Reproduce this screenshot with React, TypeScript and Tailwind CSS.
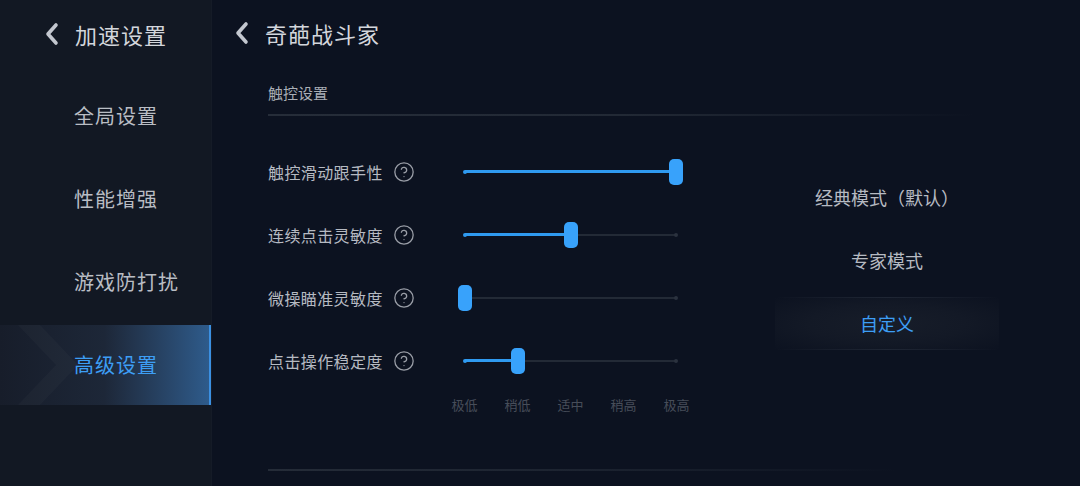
import { CircleHelp } from 'lucide-react';

const font = { fontFamily: '"Noto Sans CJK SC", "Noto Sans", sans-serif' };

const menu = ['全局设置', '性能增强', '游戏防打扰', '高级设置'];

const sliders = [
  { label: '触控滑动跟手性', value: 1 },
  { label: '连续点击灵敏度', value: 0.5 },
  { label: '微操瞄准灵敏度', value: 0 },
  { label: '点击操作稳定度', value: 0.25 },
];

const ticks = ['极低', '稍低', '适中', '稍高', '极高'];

const modes = ['经典模式（默认）', '专家模式', '自定义'];

function Chevron() {
  return (
    <svg width="18" height="24" viewBox="0 0 18 24" className="shrink-0">
      <path d="M13 3 L5 12 L13 21" fill="none" stroke="#c3c7cf" strokeWidth="3.6" strokeLinecap="round" strokeLinejoin="round" />
    </svg>
  );
}

function Slider({ value }: { value: number }) {
  const TRACK = 211;
  return (
    <div className="relative w-[225px] h-[28px]">
      <div className="absolute left-[7px] right-[7px] top-[13px] h-[2px] bg-[#232a36]" />
      <div className="absolute left-[5px] top-[12px] w-[4px] h-[4px] rounded-full bg-[#2f9af0]" />
      <div className="absolute right-[5px] top-[12px] w-[4px] h-[4px] rounded-full bg-[#2b323e]" />
      <div className="absolute left-[7px] top-[12.5px] h-[3px] bg-[#2f9af0]" style={{ width: value * TRACK }} />
      <div
        className="absolute top-[1px] w-[14px] h-[26px] rounded-[5px] bg-[#38a2fb]"
        style={{ left: value * TRACK }}
      />
    </div>
  );
}

export default function App() {
  return (
    <div className="w-[1080px] h-[486px] flex bg-[#0c1220] overflow-hidden" style={font}>
      {/* sidebar */}
      <aside className="w-[212px] h-full flex flex-col bg-[#121823] border-r border-[#151b27]">
        <div className="h-[74px] flex items-center pl-[43px] pb-[6px] gap-[14px]">
          <Chevron />
          <span className="text-[22px] text-[#d3d6dc] tracking-[1px]">加速设置</span>
        </div>
        {menu.map((m, i) => {
          const active = i === menu.length - 1;
          return (
            <div key={m} className="h-[83px] flex items-center">
              {active ? (
                <div className="relative w-full h-[80px] flex items-center pl-[74px] bg-gradient-to-r from-[#171d2a] via-[#1d2738] to-[#2e5b8b] border-r-2 border-[#3b90e2]">
                  <svg width="60" height="80" viewBox="0 0 60 80" className="absolute left-[18px] top-0">
                    <polygon points="0,0 22,0 60,40 22,80 0,80 38,40" fill="#ffffff" fillOpacity="0.025" />
                  </svg>
                  <span className="relative text-[20px] text-[#3d9ef5] tracking-[1px]">{m}</span>
                </div>
              ) : (
                <span className="pl-[74px] text-[20px] text-[#b9bdc4] tracking-[1px]">{m}</span>
              )}
            </div>
          );
        })}
      </aside>

      {/* main */}
      <main className="flex-1 h-full flex flex-col">
        <div className="h-[72px] flex items-center pl-[21px] pb-[6px] gap-[14px]">
          <Chevron />
          <span className="text-[22px] text-[#d3d6dc] tracking-[1px]">奇葩战斗家</span>
        </div>

        <div className="pl-[56px]">
          <div className="mt-[11px] h-[20px] leading-[20px] text-[15px] text-[#a9aeb6]">触控设置</div>
          <div className="mt-[11px] h-[2px] w-[708px] bg-gradient-to-r from-[#262d39] via-[#222935] to-transparent" />

          <div className="flex">
            <div className="w-[500px] pt-[24px]">
              {sliders.map((s) => (
                <div key={s.label} className="h-[63px] flex items-center">
                  <span className="w-[125px] text-[16px] tracking-[0.4px] text-[#b6bac2]">{s.label}</span>
                  <CircleHelp size={22} strokeWidth={1.4} color="#9a9ea7" />
                  <div className="ml-[43px]">
                    <Slider value={s.value} />
                  </div>
                </div>
              ))}
              <div className="flex ml-[170px] mt-[4px]">
                {ticks.map((t) => (
                  <span key={t} className="w-[53px] text-center text-[13px] leading-[18px] text-[#474d59]">
                    {t}
                  </span>
                ))}
              </div>
            </div>

            <div className="w-[224px] ml-[7px] pt-[50px]">
              {modes.map((m, i) => {
                const active = i === modes.length - 1;
                return (
                  <div key={m} className="h-[63px] flex items-center justify-center">
                    {active ? (
                      <div className="relative w-[230px] h-[53px] flex items-center justify-center bg-[radial-gradient(ellipse_at_center,#171d29_0%,#131926_50%,#0c1220_100%)]">
                        <div className="absolute top-0 left-0 right-0 h-px bg-gradient-to-r from-transparent via-[#1f2634] to-transparent" />
                        <div className="absolute bottom-0 left-0 right-0 h-px bg-gradient-to-r from-transparent via-[#1f2634] to-transparent" />
                        <span className="text-[18px] text-[#3d9ef5]">{m}</span>
                      </div>
                    ) : (
                      <span className="text-[18px] text-[#b6bac2]">{m}</span>
                    )}
                  </div>
                );
              })}
            </div>
          </div>

          <div className="mt-[55px] h-[2px] w-[630px] bg-gradient-to-r from-[#252c38] via-[#1c2330] to-transparent" />
        </div>
      </main>
    </div>
  );
}
